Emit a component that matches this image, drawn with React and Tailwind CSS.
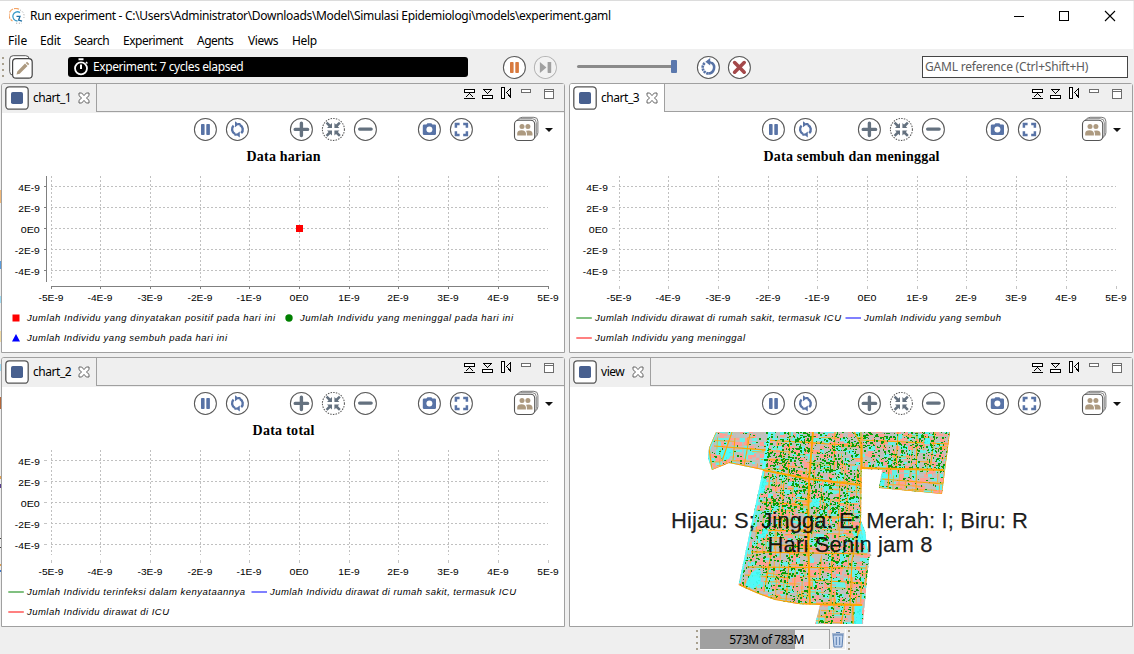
import React from "react";

const UI = "font-['Noto_Sans','Open_Sans',sans-serif] text-[12px] whitespace-nowrap";

/* ---------- round tool buttons ---------- */
function Round({ children, stroke = "#5a5a5a", dash }) {
  return (
    <svg width="24" height="24" viewBox="-0.4 -0.4 24 24" className="block shrink-0">
      <circle cx="12" cy="12" r="11" fill="#fff" stroke={stroke} strokeWidth="1.05" strokeDasharray={dash} />
      {children}
    </svg>
  );
}
const BLUE = "#5873a6";
const SLATE = "#64717f";

const PauseBtn = ({ color = BLUE }) => (
  <Round>
    <rect x="7.6" y="6.5" width="3.6" height="11.2" rx="0.8" fill={color} />
    <rect x="12.9" y="6.5" width="3.6" height="11.2" rx="0.8" fill={color} />
  </Round>
);
const StepBtn = () => (
  <Round stroke="#b5b5b5">
    <circle cx="12" cy="12" r="10.3" fill="#f2f2f2" />
    <path d="M6.5 6.5 L13 12 L6.5 17.5Z" fill="#a0a0a0" />
    <rect x="14.2" y="6.5" width="3.6" height="11" rx="0.6" fill="#a0a0a0" />
  </Round>
);
const SyncBtn = () => (
  <Round>
    <g fill="none" stroke={BLUE} strokeWidth="2.4">
      <path d="M9.6 16.6 A5.2 5.2 0 0 1 8.2 8.2" />
      <path d="M14.4 7.4 A5.2 5.2 0 0 1 15.8 15.8" />
    </g>
    <path d="M14.4 3.8 V9.8 L10.4 6.8Z M9.6 14.2 V20.2 L13.6 17.2Z" fill={BLUE} transform="matrix(-1 0 0 1 24 0)" />
    <path d="M12.6 6.8 H15 M9 17.2 H11.4" stroke={BLUE} strokeWidth="2.2" />
  </Round>
);
const PlusBtn = () => (
  <Round>
    <path d="M5.8 12 H18.2 M12 5.8 V18.2" stroke={SLATE} strokeWidth="3.4" strokeLinecap="round" />
  </Round>
);
const MinusBtn = () => (
  <Round>
    <path d="M6.2 11.7 H17.8" stroke={SLATE} strokeWidth="3.2" strokeLinecap="round" />
  </Round>
);
const FitBtn = () => (
  <Round dash="1.5 1.2">
    <path
      d="M10.6 10.6 V5.6 L9 7.1 L6 4.3 L4.3 6 L7.1 9 L5.6 10.6Z M13 10.6 V5.6 L14.6 7.1 L17.6 4.3 L19.3 6 L16.5 9 L18 10.6Z M10.6 13 V18 L9 16.5 L6 19.3 L4.3 17.6 L7.1 14.6 L5.6 13Z M13 13 V18 L14.6 16.5 L17.6 19.3 L19.3 17.6 L16.5 14.6 L18 13Z"
      fill={SLATE}
    />
  </Round>
);
const CameraBtn = () => (
  <Round>
    <path d="M6.8 7.2 H9 L10 5.8 H14 L15 7.2 H17.2 Q18.6 7.2 18.6 8.4 V16.4 Q18.6 17.6 17.2 17.6 H6.8 Q5.4 17.6 5.4 16.4 V8.4 Q5.4 7.2 6.8 7.2Z" fill={BLUE} />
    <circle cx="12" cy="12.1" r="3" fill="#fff" />
  </Round>
);
const FullBtn = () => (
  <Round>
    <path d="M6.5 10.3 V6.7 H10.2 M13.8 6.7 H17.5 V10.3 M17.5 13.9 V17.5 H13.8 M10.2 17.5 H6.5 V13.9" fill="none" stroke={BLUE} strokeWidth="2.5" />
  </Round>
);
const ReloadBtn = () => (
  <Round>
    <path d="M15.4 7.4 A5.9 5.9 0 0 1 12 18" fill="none" stroke={BLUE} strokeWidth="2.6" />
    <path d="M12 18 A5.9 5.9 0 0 1 8.9 7.2" fill="none" stroke={BLUE} strokeWidth="2.6" strokeDasharray="2.2 0.7" />
    <path d="M9 6.4 L13.8 2.6 V10.2Z" fill={BLUE} />
    <path d="M13 6.6 L16.4 8" stroke={BLUE} strokeWidth="2.2" />
  </Round>
);
const StopBtn = () => (
  <Round>
    <path d="M7.2 7.2 L16.8 16.8 M16.8 7.2 L7.2 16.8" stroke="#a4484a" strokeWidth="3.6" strokeLinecap="round" />
  </Round>
);
const PeopleBtn = () => (
  <svg width="26" height="26" viewBox="-0.3 -0.5 26 26" className="block shrink-0">
    <rect x="4.8" y="0.8" width="19.8" height="19.5" rx="4" fill="#fff" stroke="#777" />
    <rect x="3" y="2.2" width="20" height="20" rx="4" fill="#fff" stroke="#888" />
    <rect x="1.2" y="3.8" width="20.2" height="20.2" rx="4" fill="#fff" stroke="#555" strokeWidth="1.1" />
    <g fill="#ad9a80">
      <circle cx="8.7" cy="10" r="2.5" />
      <circle cx="14.6" cy="10" r="2.5" />
      <path d="M3.9 19 V17 Q4 13.8 8.3 13.8 Q12 13.8 12.6 16.8 V19Z" />
      <path d="M13.6 19 V16.4 L12.8 14.2 Q18.9 12.9 19.2 17 V19Z" />
    </g>
  </svg>
);

/* ---------- panel frame ---------- */
const ViewControls = () => (
  <svg width="92" height="13" viewBox="0 0 92 13" shapeRendering="crispEdges" className="block" fill="none">
    <g stroke="#000">
      <rect x="1.5" y="2.5" width="10" height="3" fill="#fff" />
      <path d="M1 11.5 H12 M2.5 10.5 L6.5 6.5 L10.5 10.5" />
      <path d="M20 2.5 H29 M20.5 2.5 L24.5 6.5 L28.5 2.5" />
      <rect x="19.5" y="8.5" width="10" height="3" fill="#fff" />
      <rect x="38.5" y="0.5" width="3" height="11" fill="#fff" />
      <path d="M47.5 1.5 V10 L43.5 5.5Z" />
    </g>
    <g stroke="#6d6d6d">
      <rect x="58.5" y="2.5" width="9" height="3" fill="#fff" />
      <rect x="81.5" y="2.5" width="9" height="9" fill="#fff" />
      <path d="M81 4.5 H91" />
    </g>
  </svg>
);

function Panel({ name, tabClass, stripClass = "bg-[#efefef]", children }) {
  return (
    <section className="flex h-[270px] w-[564px] flex-col rounded-t-[3px] border border-[#a0a0a0] bg-white">
      <header className="flex h-[28px] shrink-0">
        <div className={"flex shrink-0 items-center rounded-tl-[2px] border-r border-[#a0a0a0] pl-[3px] " + tabClass}>
          <svg width="24" height="24" viewBox="0 0 24 24" className="block shrink-0">
            <rect x="0.8" y="0.8" width="22.4" height="22.4" rx="3.5" fill="#fff" stroke="#555" strokeWidth="1.3" />
            <rect x="6" y="6" width="12" height="12" rx="1.8" fill="#48608f" />
          </svg>
          <span className={UI + " ml-[4px] grow tracking-[-0.45px] text-black"}>{name}</span>
          <svg width="12" height="12" viewBox="0 0 12 12" className="mr-[6px] block shrink-0">
            <path d="M1 1 H3.7 L6 3.6 L8.3 1 H11 V3.7 L8.4 6 L11 8.3 V11 H8.3 L6 8.4 L3.7 11 H1 V8.3 L3.6 6 L1 3.7Z" fill="#fff" stroke="#555" strokeWidth="0.9" />
          </svg>
        </div>
        <div className="flex grow justify-end border-b border-[#a0a0a0] bg-[#efefef] pt-[3px] pr-[9px]">
          <ViewControls />
        </div>
      </header>
      <div className={"h-px shrink-0 " + stripClass} />
      <div className="flex h-[32px] shrink-0 items-center pl-[191px]">
        <div className="flex gap-[8px]">
          <PauseBtn />
          <SyncBtn />
        </div>
        <div className="ml-[40px] flex gap-[8px]">
          <PlusBtn />
          <FitBtn />
          <MinusBtn />
        </div>
        <div className="ml-[40px] flex gap-[8px]">
          <CameraBtn />
          <FullBtn />
        </div>
        <div className="ml-[40px] flex items-center gap-[6px]">
          <PeopleBtn />
          <svg width="8" height="6" viewBox="0 -2 8 6" className="block">
            <path d="M0 0 H8 L4 4Z" fill="#111" />
          </svg>
        </div>
      </div>
      {children}
    </section>
  );
}

/* ---------- charts ---------- */
const XS = [51.5, 100.5, 150.5, 200.5, 249.5, 299.5, 349.5, 398.5, 448.5, 498.5, 548.5];
const XL = ["-5E-9", "-4E-9", "-3E-9", "-2E-9", "-1E-9", "0E0", "1E-9", "2E-9", "3E-9", "4E-9", "5E-9"];
const YS = [186.5, 207.5, 228.5, 249.5, 270.5];
const YL = ["4E-9", "2E-9", "0E0", "-2E-9", "-4E-9"];
const labelWidth = (s) => (s.length === 5 ? 25 : s.length === 4 ? 21.5 : 19);

function Marker({ type, color, x, y }) {
  if (type === "square") return <rect x={x} y={y - 3.5} width="7" height="7" fill={color} />;
  if (type === "dot") return <circle cx={x + 3.5} cy={y} r="3.7" fill={color} />;
  if (type === "tri") return <path d={`M${x - 0.5} ${y + 3.5} H${x + 7.5} L${x + 3.5} ${y - 4}Z`} fill={color} />;
  return <rect x={x} y={y - 1} width="15.5" height="2" fill={color} />;
}

function Chart({ title, titleX, titleW, axis, legend }) {
  return (
    <svg width="562" height="206" viewBox="2 145 562 206" className="block shrink-0">
      <text x={titleX} y="161" textLength={titleW} className="font-['Liberation_Serif',serif] text-[14px] font-bold">
        {title}
      </text>
      <g shapeRendering="crispEdges" stroke="#c0c0c0" strokeDasharray="2 2">
        {XS.slice(0, 10).map((x) => (
          <path key={x} d={`M${x} 176 V281`} />
        ))}
        {YS.map((y) => (
          <path key={y} d={`M51 ${y} H548`} />
        ))}
      </g>
      <g shapeRendering="crispEdges" stroke={axis ? "#808080" : "#c4c4c4"}>
        {XS.map((x) => (
          <path key={x} d={`M${x} 286 V289`} />
        ))}
        {YS.map((y) => (
          <path key={y} d={`M44 ${y} H47`} />
        ))}
        {axis && <path d="M46.5 176 V282 M51 286.5 H549" />}
      </g>
      <g className="font-['Liberation_Sans',sans-serif] text-[9.5px]" fill="#000">
        {XL.map((s, i) => (
          <text key={s} x={XS[i] - 0.5 - labelWidth(s) / 2} y="300.8" textLength={labelWidth(s)} lengthAdjust="spacingAndGlyphs">
            {s}
          </text>
        ))}
        {YL.map((s, i) => (
          <text key={s} x={39.8 - labelWidth(s)} y={YS[i] + 4.3} textLength={labelWidth(s)} lengthAdjust="spacingAndGlyphs">
            {s}
          </text>
        ))}
      </g>
      {axis && <rect x="296" y="225" width="7" height="7" fill="#f00" />}
      <g className="font-['Liberation_Sans',sans-serif] text-[9.5px] italic" fill="#000">
        {legend.map((l) => (
          <React.Fragment key={l.text}>
            <Marker type={l.type} color={l.color} x={l.mx} y={l.y} />
            <text x={l.x} y={l.y + 3} textLength={l.w}>
              {l.text}
            </text>
          </React.Fragment>
        ))}
      </g>
    </svg>
  );
}

/* ---------- agent map ---------- */
function makeRandom(seed) {
  let s = seed;
  return () => {
    s = (s + 0x6d2b79f5) | 0;
    let t = Math.imul(s ^ (s >>> 15), 1 | s);
    t = (t + Math.imul(t ^ (t >>> 7), 61 | t)) ^ t;
    return ((t ^ (t >>> 14)) >>> 0) / 4294967296;
  };
}
const OUTLINE =
  "M716 432 L709 448 L708 458 L712 470 L729 463 L763 470 L738.5 585 L756 593 L775 600 L798 604 L820 605 L815 624 H863 L869 558 L871.5 555 L868 552 L865 531 L861 521 L862 469 L882 470 L879 488 L942 494 L950 432Z";

function buildMap() {
  const r = makeRandom(77);
  const paths = { pink: "", cyan: "", grey: "", green: "", roads: "" };
  for (let y = 430; y < 626; y += 4) {
    for (let x = 704; x < 954; x += 4) {
      const v = r();
      const w = 3 + Math.floor(r() * 4);
      const h = 2 + Math.floor(r() * 4);
      const k = v < 0.34 ? "pink" : v < 0.62 ? "cyan" : "grey";
      paths[k] += `M${x} ${y}h${w}v${h}h${-w}z`;
    }
  }
  for (let i = 0; i < 9500; i++) {
    const x = 706 + Math.floor(r() * 246);
    const y = 432 + Math.floor(r() * 192);
    let d;
    if (x < 766 && y < 475) d = 0.14;
    else if (x > 880 && y > 468) d = 0.26;
    else if (y < 515) d = 0.66 + 0.3 * Math.sin(x / 9) * Math.cos(y / 7);
    else d = 0.4 + 0.24 * Math.sin(x / 7 + 1) * Math.cos(y / 8);
    if (r() < d) {
      const w = r() < 0.45 ? 2 : 1;
      const h = r() < 0.6 ? 1 : 2;
      paths.green += `M${x} ${y}h${w}v${h}h${-w}z`;
    }
  }
  for (let i = 0; i < 460; i++) {
    const x = 706 + Math.floor(r() * 240);
    const y = 434.5 + Math.floor(r() * 190);
    const n = 6 + Math.floor(r() * 18);
    paths.roads += r() < 0.5 ? `M${x} ${y}l${n} ${(n * 0.04).toFixed(1)}` : `M${x + 0.5} ${y}l${(-n * 0.05).toFixed(1)} ${n}`;
  }
  return paths;
}
const MAP = buildMap();

function MapView() {
  return (
    <svg width="562" height="206" viewBox="570 419 562 206" className="block shrink-0">
      <defs>
        <clipPath id="area">
          <path d={OUTLINE} />
        </clipPath>
      </defs>
      <g clipPath="url(#area)">
        <path d={OUTLINE} fill="#c4beb4" />
        <path d={MAP.grey} fill="#c0c0c0" />
        <path d={MAP.pink} fill="#ff9f94" />
        <path d={MAP.cyan} fill="#66f0e8" />
        <path d={MAP.roads} stroke="#fbad28" strokeWidth="0.9" fill="none" />
        <g stroke="#ffa500" fill="none" strokeWidth="1">
          <path d="M766 440 L813 443 L862 446 M862 440 L950 444 M735 438 L733 460 M750 434 L744 466" />
          <path d="M761 502 L808 505 M757 530 L810 531 M809 516 L862 518 M775 545 L812 546 M745 575 L790 578 M810 580 L864 583" />
          <path d="M790 432 L788 480 M784 480 L781 530 M790 550 L786 601 M835 432 L834 470 M840 480 L838 530 M832 550 L831 604 M771 555 L764 592" />
          <path d="M898 432 L896 468 M917 432 L916 491 M935 432 L930 470" />
        </g>
        <path d="M770 432 L763 470" stroke="#5ff" strokeWidth="3" />
        <path d={MAP.green} fill="#08a008" shapeRendering="crispEdges" />
        <path
          d="M752 572 L758 569 L761 571 L760 584 L753 589 L745 585 L749 577Z M726 447 L732 450 L729 459 L722 461 L720 453Z M855 606 h7 v18 h-8z M762 478 l5 1 l-3 14 h-5z M763 528 l5 2 l-3 8 h-4z M812 500 l7 -1 v9 l-6 -2z M925 438 h5 v6 h-6z M882 473 l4 -1 l-2 14 h-4z M852 532 l12 3 l2 10 l-8 -3z"
          fill="#4ff"
          fillOpacity="0.9"
        />
        <path d="M716 432 L709 448 L708 458 L712 470 M763 471 L739 583 M861 520 L868 552" stroke="#5ff" strokeWidth="3.5" fill="none" />
        <g stroke="#ffa500" fill="none" strokeWidth="1.2">
          <path d="M813 432 L809 480 L808 534 L810 605" strokeWidth="2" />
          <path d="M854 432 L862 446 L862 469 M861 432 L861 520 L852 560 L850 605" />
          <path d="M729 463 L763 470 L809 479 L861 485" strokeWidth="1.8" />
          <path d="M862 468 L944 470" strokeWidth="1.8" />
          <path d="M716 432 L709 448 L712 470 L729 463 M714 446 L766 450 M732 432 L722 461" />
          <path d="M751 552 L867 554 M747 567 L866 568" />
          <path d="M739 585 L756 593 L775 600 L798 604 L862 605" strokeWidth="2.2" />
          <path d="M845 604 L841 624 M853 605 V624" />
          <path d="M889 470 L888 489 M879 488 L942 494 L950 432 M882 479 L943 484" />
        </g>
      </g>
      <g className="font-['Liberation_Sans',sans-serif] text-[22px]" fill="#000" fillOpacity="0.88" stroke="#000" strokeWidth="0.25" strokeOpacity="0.8">
        <text x="671" y="528" textLength="357">Hijau: S; Jingga: E; Merah: I; Biru: R</text>
        <text x="767.5" y="552" textLength="165">Hari Senin jam 8</text>
      </g>
    </svg>
  );
}

/* ---------- data ---------- */
const G = "#80c080";
const B = "#8080ff";
const R = "#ff8080";
const LEGEND_1 = [
  { type: "square", color: "#f00", mx: 12.5, x: 27, y: 318, w: 248, text: "Jumlah Individu yang dinyatakan positif pada hari ini" },
  { type: "dot", color: "#008000", mx: 285.5, x: 300, y: 318, w: 213, text: "Jumlah Individu yang meninggal pada hari ini" },
  { type: "tri", color: "#00f", mx: 12.5, x: 27, y: 338, w: 200, text: "Jumlah Individu yang sembuh pada hari ini" },
];
const LEGEND_2 = [
  { color: G, mx: 8.3, x: 27, y: 318, w: 218, text: "Jumlah Individu terinfeksi dalam kenyataannya" },
  { color: B, mx: 251.5, x: 270, y: 318, w: 246, text: "Jumlah Individu dirawat di rumah sakit, termasuk ICU" },
  { color: R, mx: 8.3, x: 27, y: 338, w: 142, text: "Jumlah Individu dirawat di ICU" },
];
const LEGEND_3 = [
  { color: G, mx: 8.3, x: 27, y: 318, w: 246, text: "Jumlah Individu dirawat di rumah sakit, termasuk ICU" },
  { color: B, mx: 277.5, x: 296, y: 318, w: 137, text: "Jumlah Individu yang sembuh" },
  { color: R, mx: 8.3, x: 27, y: 338, w: 150, text: "Jumlah Individu yang meninggal" },
];

const Grip = () => (
  <svg width="2" height="22" viewBox="0 0 2 22" className="block shrink-0">
    <path d="M1 1 V22" stroke="#a8a08e" strokeWidth="2" strokeDasharray="2 4" />
  </svg>
);

export default function App() {
  return (
    <div className="flex h-[654px] w-[1134px] flex-col overflow-hidden border-t border-[#dcdcdc] bg-[#efefef]">
      <div className="mr-px flex h-[30px] shrink-0 items-center bg-white pl-[9px]">
        <svg width="16" height="16" viewBox="0 0 16 16" className="block shrink-0" fill="none">
          <path d="M10 1.3 A6.6 6.6 0 0 0 3.5 13" stroke="#f2a365" strokeWidth="1.2" strokeDasharray="5 1" />
          <path d="M11 4.6 A4.6 4.6 0 1 0 8.5 13" stroke="#3a9bc8" strokeWidth="1.3" />
          <path d="M7.5 8.3 H11 L9.6 12 L13 13.2" stroke="#1d6fa5" strokeWidth="1.3" />
          <path d="M11 2 A6.5 6.5 0 0 1 14.8 10 M7 15.2 H13" stroke="#aaa" strokeDasharray="1.2 1.6" />
        </svg>
        <span className={UI + " ml-[5px] w-[584px] tracking-[-0.315px] text-black"}>
          Run experiment - C:\Users\Administrator\Downloads\Model\Simulasi Epidemiologi\models\experiment.gaml
        </span>
        <svg width="103" height="12" viewBox="0 0 103 12" className="mr-[17px] ml-auto block" fill="none" stroke="#000">
          <path d="M1 6.5 H11" shapeRendering="crispEdges" />
          <rect x="46.5" y="1.5" width="9" height="9" shapeRendering="crispEdges" />
          <path d="M92 1 L102 11 M102 1 L92 11" strokeWidth="1.1" />
        </svg>
      </div>

      <nav className={UI + " mr-px flex h-[18px] shrink-0 items-center bg-white pt-[2px] pl-[8px] text-black"}>
        <span className="w-[32px]">File</span>
        <span className="w-[34px] tracking-[-0.2px]">Edit</span>
        <span className="w-[49px] tracking-[-0.45px]">Search</span>
        <span className="w-[74px] tracking-[-0.5px]">Experiment</span>
        <span className="w-[51px] tracking-[-0.5px]">Agents</span>
        <span className="w-[44px] tracking-[-0.35px]">Views</span>
        <span className="tracking-[-0.3px]">Help</span>
      </nav>

      <div className="flex h-[34px] shrink-0 items-center pt-px pl-[2px]">
        <Grip />
        <svg width="24" height="24" viewBox="0 0 24 24" className="ml-[5px] block shrink-0">
          <rect x="0.7" y="0.7" width="19.5" height="19.5" rx="3.5" fill="#fff" stroke="#555" />
          <rect x="3.6" y="3.6" width="19.6" height="19.6" rx="3.5" fill="#fff" stroke="#444" strokeWidth="1.2" />
          <path d="M7.5 19.5 L8.3 16.4 L16 8.6 L18.5 11 L10.7 18.8Z M16.8 7.9 L18 6.8 L20.3 9 L19.1 10.2Z" fill="#ad9a80" />
        </svg>
        <div className="ml-[35px] flex h-[20px] w-[400px] items-center rounded-[3px] bg-black pl-[5px]">
          <svg width="16" height="18" viewBox="0 0 16 18" className="block" fill="none" stroke="#fff">
            <circle cx="8" cy="10.3" r="6" strokeWidth="1.8" />
            <path d="M5.5 1.3 H10.5 M8 6.5 V11" strokeWidth="2" />
            <path d="M13 4 L14.4 5.4" strokeWidth="1.4" />
          </svg>
          <span className={UI + " ml-[4px] tracking-[-0.4px] text-white"}>Experiment: 7 cycles elapsed</span>
        </div>
        <div className="ml-[34px] flex gap-[7px]">
          <PauseBtn color="#d87a3e" />
          <StepBtn />
        </div>
        <div className="ml-[20px] flex h-[14px] w-[100px] items-center">
          <div className="h-[3px] w-[94px] rounded-l bg-[#8a8a8a]" />
          <div className="h-[13px] w-[6px] rounded-[1px] bg-[#5b78ad]" />
        </div>
        <div className="ml-[19px] flex gap-[7px]">
          <ReloadBtn />
          <StopBtn />
        </div>
        <div className="mr-[6px] ml-auto flex h-[22px] w-[206px] items-center border border-[#444] bg-white pl-[2px]">
          <span className={UI + " tracking-[-0.2px] text-[#5c5c5c]"}>GAML reference (Ctrl+Shift+H)</span>
        </div>
      </div>

      <div className="flex shrink-0">
        <div className="flex h-[544px] w-px shrink-0 flex-col">
          <div className="mt-[107px] h-[13px] bg-[#f0b878]" />
          <div className="mt-[58px] h-[8px] bg-[#5a9bdc]" />
          <div className="mt-[27px] h-[7px] bg-[#9fdcf5]" />
          <div className="mt-[28px] h-[11px] bg-[#f2dca5]" />
          <div className="mt-[22px] h-[7px] bg-[#9fdcf5]" />
          <div className="mt-[26px] h-[12px] bg-[#b5673a]" />
          <div className="mt-[67px] h-[3px] bg-[#e0a050]" />
          <div className="mt-[5px] h-[4px] bg-[#5a3f8f]" />
          <div className="mt-[50px] h-[1px] bg-[#444]" />
          <div className="mt-[8px] h-[1px] bg-[#444]" />
          <div className="mt-[16px] h-[2px] bg-[#e0a050]" />
          <div className="mt-[4px] h-[2px] bg-[#3f78c8]" />
        </div>
        <main className="grid grid-cols-[564px_564px] gap-[4px]">
          <Panel name="chart_1" tabClass="w-[95px] bg-[#efefef]">
            <Chart title="Data harian" titleX={246.5} titleW={74} axis legend={LEGEND_1} />
          </Panel>
          <Panel name="chart_3" tabClass="w-[95px] bg-white" stripClass="bg-white">
            <Chart title="Data sembuh dan meninggal" titleX={195.5} titleW={176} legend={LEGEND_3} />
          </Panel>
          <Panel name="chart_2" tabClass="w-[95px] bg-[#efefef]">
            <Chart title="Data total" titleX={252.5} titleW={62} legend={LEGEND_2} />
          </Panel>
          <Panel name="view" tabClass="w-[81px] bg-[#efefef]">
            <MapView />
          </Panel>
        </main>
      </div>

      <footer className="flex grow items-start pt-[2px] pl-[696px]">
        <Grip />
        <div className="ml-[2px] flex h-[21px] w-[146px] border-r border-b border-white">
          <div className="flex w-[130px] items-center justify-center border-t border-r border-[#a0a0a0] bg-[linear-gradient(to_right,#a0a0a0_95px,#efefef_95px)]">
            <span className={UI + " pl-[4px] tracking-[-0.5px] text-black"}>573M of 783M</span>
          </div>
          <svg width="15" height="20" viewBox="0 0 15 20" className="block" stroke="#5a7fb0">
            <path d="M3 6 H13 L12 18 H4Z" fill="#c3d5ee" />
            <path d="M2 5 H14 M6 3.5 H10 M6.3 8 V16 M9.7 8 V16" fill="none" />
          </svg>
        </div>
        <div className="ml-[2px]">
          <Grip />
        </div>
      </footer>
    </div>
  );
}
